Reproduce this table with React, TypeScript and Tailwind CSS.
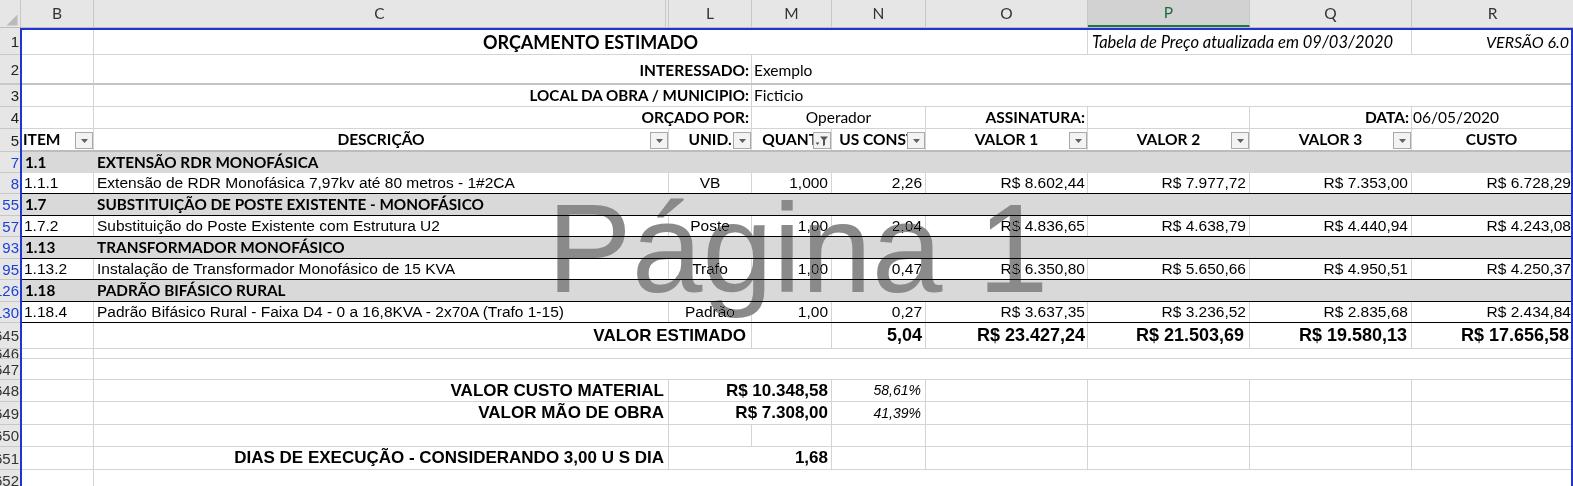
import React from "react";

const ARIAL = "font-['Liberation_Sans',Arial,sans-serif]";
const CAL = "font-['Lato','Carlito',sans-serif]";
const gl = "border-r border-[#d4d4d4]";
const rowB = "border-b border-[#d4d4d4]";

const B = "w-[72px]";
const C = "w-[575px]";
const L = "w-[83px]";
const M = "w-[80px]";
const N = "w-[94px]";
const O = "w-[162px]";
const P = "w-[162px]";
const Q = "w-[162px]";
const R = "w-[159px]";

function Cell({ w, cls = "", children }: { w: string; cls?: string; children?: React.ReactNode }) {
  return (
    <div className={`${w} shrink-0 h-full flex items-center overflow-hidden whitespace-nowrap relative ${cls}`}>
      {children}
    </div>
  );
}

function Row({ h, b = "", cls = "", children }: { h: string; b?: string; cls?: string; children?: React.ReactNode }) {
  return <div className={`flex w-full ${h} ${b} ${cls}`}>{children}</div>;
}

function FilterBtn({ active = false }: { active?: boolean }) {
  return (
    <div className="absolute right-0 top-[3px] w-[18px] h-[17px] border border-[#a9a9a9] bg-[#f3f3f3] flex items-center justify-center">
      {active ? (
        <svg width="14" height="12" viewBox="0 0 14 12">
          <path d="M5 1.5h8l-3 3.5v5l-2 1V5z" fill="#555" />
          <path d="M0.5 7.5h4l-2 2.5z" fill="#555" />
        </svg>
      ) : (
        <svg width="7" height="4" viewBox="0 0 7 4">
          <path d="M0 0h7L3.5 4z" fill="#606060" />
        </svg>
      )}
    </div>
  );
}

const rowHeaders: { l: string; h: string; c: string; b: string }[] = [
  { l: "1", h: "h-[27px]", c: "text-[#222]", b: "border-b" },
  { l: "2", h: "h-[30px]", c: "text-[#222]", b: "border-b-2" },
  { l: "3", h: "h-[22px]", c: "text-[#222]", b: "border-b" },
  { l: "4", h: "h-[22px]", c: "text-[#222]", b: "border-b" },
  { l: "5", h: "h-[23px]", c: "text-[#222]", b: "border-b" },
  { l: "7", h: "h-[21px]", c: "text-[#1d3fd6]", b: "border-b" },
  { l: "8", h: "h-[21px]", c: "text-[#1d3fd6]", b: "border-b" },
  { l: "55", h: "h-[22px]", c: "text-[#1d3fd6]", b: "border-b" },
  { l: "57", h: "h-[21px]", c: "text-[#1d3fd6]", b: "border-b" },
  { l: "93", h: "h-[22px]", c: "text-[#1d3fd6]", b: "border-b" },
  { l: "95", h: "h-[21px]", c: "text-[#1d3fd6]", b: "border-b" },
  { l: "126", h: "h-[22px]", c: "text-[#1d3fd6]", b: "border-b" },
  { l: "130", h: "h-[21px]", c: "text-[#1d3fd6]", b: "border-b" },
  { l: "645", h: "h-[26px]", c: "text-[#333]", b: "border-b" },
  { l: "646", h: "h-[10px]", c: "text-[#333]", b: "border-b" },
  { l: "647", h: "h-[21px]", c: "text-[#333]", b: "border-b" },
  { l: "648", h: "h-[22px]", c: "text-[#333]", b: "border-b" },
  { l: "649", h: "h-[23px]", c: "text-[#333]", b: "border-b" },
  { l: "650", h: "h-[22px]", c: "text-[#333]", b: "border-b" },
  { l: "651", h: "h-[23px]", c: "text-[#333]", b: "border-b" },
  { l: "652", h: "h-[22px]", c: "text-[#333]", b: "border-b" },
];

function DataRow({ item, desc, unit, qty, us, v1, v2, v3, cost }: { item: string; desc: string; unit: string; qty: string; us: string; v1: string; v2: string; v3: string; cost: string }) {
  return (
    <Row h="h-[21px]" b="border-b border-black" cls={`${ARIAL} text-[15.5px] text-black`}>
      <Cell w={B} cls={`${gl} pl-[2px]`}>{item}</Cell>
      <Cell w={C} cls={`${gl} pl-[3px]`}>{desc}</Cell>
      <Cell w={L} cls={`${gl} justify-center`}>{unit}</Cell>
      <Cell w={M} cls={`${gl} justify-end pr-[3px]`}>{qty}</Cell>
      <Cell w={N} cls={`${gl} justify-end pr-[3px]`}>{us}</Cell>
      <Cell w={O} cls={`${gl} justify-end pr-[2px]`}>{v1}</Cell>
      <Cell w={P} cls={`${gl} justify-end pr-[3px]`}>{v2}</Cell>
      <Cell w={Q} cls={`${gl} justify-end pr-[3px]`}>{v3}</Cell>
      <Cell w={R} cls="justify-end pr-0 overflow-visible">{cost}</Cell>
    </Row>
  );
}

function GroupRow({ item, title, last = true }: { item: string; title: string; last?: boolean }) {
  return (
    <Row
      h={last ? "h-[22px]" : "h-[21px]"}
      b={last ? "border-b border-black" : ""}
      cls={`bg-[#d9d9d9] ${CAL} font-bold text-[15.3px] text-black`}
    >
      <Cell w={B} cls="pl-[3px]">{item}</Cell>
      <Cell w="w-[1477px]" cls="pl-[3px]">{title}</Cell>
    </Row>
  );
}

export default function App() {
  const colHdr = `h-full flex items-center justify-center border-r border-[#c8c8c8] text-[15.5px] text-[#333] ${CAL}`;
  return (
    <div className="w-[1573px] h-[486px] overflow-hidden relative bg-white">
      {/* Column header */}
      <div className="flex h-[28px] bg-[#e6e6e6] border-b border-[#bdbdbd]">
        <div className="w-[21px] shrink-0 h-full border-r border-[#c8c8c8] relative">
          <svg width="21" height="27" viewBox="0 0 21 27" className="absolute left-0 top-0">
            <path d="M17.5 14.5V25.5H6.5z" fill="#b9b9b9" />
          </svg>
        </div>
        <div className={`w-[73px] shrink-0 ${colHdr}`}>B</div>
        <div className={`w-[572px] shrink-0 ${colHdr}`}>C</div>
        <div className={`w-[3px] shrink-0 ${colHdr}`}></div>
        <div className={`w-[83px] shrink-0 ${colHdr}`}>L</div>
        <div className={`w-[80px] shrink-0 ${colHdr}`}>M</div>
        <div className={`w-[94px] shrink-0 ${colHdr}`}>N</div>
        <div className={`w-[162px] shrink-0 ${colHdr}`}>O</div>
        <div className={`w-[162px] shrink-0 h-full flex items-center justify-center border-r border-[#c8c8c8] border-b-2 border-b-[#217346] bg-[#d2d2d2] text-[15.5px] text-[#1e6b3f] ${CAL}`}>P</div>
        <div className={`w-[162px] shrink-0 ${colHdr}`}>Q</div>
        <div className={`flex-1 ${colHdr} border-r-0`}>R</div>
      </div>

      <div className="flex">
        {/* Row headers */}
        <div className="w-[20px] shrink-0 flex flex-col bg-[#e6e6e6]">
          {rowHeaders.map((r) => (
            <div
              key={r.l}
              className={`${r.h} ${r.b} border-[#c8c8c8] shrink-0 flex items-center justify-end overflow-hidden pr-[1px] ${ARIAL} text-[15px] leading-none ${r.c}`}
            >
              <span className="whitespace-nowrap">{r.l}</span>
            </div>
          ))}
        </div>

        {/* Sheet */}
        <div className="w-[1553px] shrink-0 flex flex-col border-l-2 border-t-2 border-r-2 border-[#1f35d0]">
          {/* Row 1 */}
          <Row h="h-[25px]" b={rowB} cls={`${CAL} text-black`}>
            <Cell w={B} cls={gl} />
            <Cell w="w-[994px]" cls={`${gl} justify-center font-bold text-[18px]`}>ORÇAMENTO ESTIMADO</Cell>
            <Cell w="w-[324px]" cls={`${gl} pl-[4px] italic text-[16.5px]`}>Tabela de Preço atualizada em 09/03/2020</Cell>
            <Cell w={R} cls="justify-end pr-[2px] italic text-[16px]">VERSÃO 6.0</Cell>
          </Row>
          {/* Row 2 */}
          <Row h="h-[30px]" b="border-b-2 border-[#c4c4c4]" cls={`${CAL} text-[15.5px] text-black`}>
            <Cell w={B} cls={gl} />
            <Cell w="w-[658px]" cls={`${gl} justify-end pr-[2px] pt-[3px] font-bold`}>INTERESSADO:</Cell>
            <Cell w="w-[819px]" cls="pl-[2px] pt-[3px]">Exemplo</Cell>
          </Row>
          {/* Row 3 */}
          <Row h="h-[22px]" b={rowB} cls={`${CAL} text-[15.5px] text-black`}>
            <Cell w={B} cls={gl} />
            <Cell w="w-[658px]" cls={`${gl} justify-end pr-[2px] font-bold text-[15.2px]`}>LOCAL DA OBRA / MUNICIPIO:</Cell>
            <Cell w="w-[819px]" cls="pl-[2px]">Ficticio</Cell>
          </Row>
          {/* Row 4 */}
          <Row h="h-[22px]" b={rowB} cls={`${CAL} text-[15.5px] text-black`}>
            <Cell w={B} cls={gl} />
            <Cell w="w-[658px]" cls={`${gl} justify-end pr-[2px] font-bold`}>ORÇADO POR:</Cell>
            <Cell w="w-[174px]" cls={`${gl} justify-center`}>Operador</Cell>
            <Cell w={O} cls={`${gl} justify-end pr-[2px] font-bold`}>ASSINATURA:</Cell>
            <Cell w={P} cls={gl} />
            <Cell w={Q} cls={`${gl} justify-end pr-[2px] font-bold`}>DATA:</Cell>
            <Cell w={R} cls="pl-[1px]">06/05/2020</Cell>
          </Row>
          {/* Row 5 headers */}
          <Row h="h-[23px]" b="border-b-2 border-[#bcbcbc]" cls={`${CAL} text-[15.5px] font-bold text-black`}>
            <Cell w={B} cls={`${gl} pl-[1px]`}>
              ITEM
              <FilterBtn />
            </Cell>
            <Cell w={C} cls={`${gl} justify-center`}>
              DESCRIÇÃO
              <FilterBtn />
            </Cell>
            <Cell w={L} cls={`${gl} justify-center`}>
              UNID.
              <FilterBtn />
            </Cell>
            <Cell w={M} cls={`${gl} justify-center`}>
              QUANT.
              <FilterBtn active />
            </Cell>
            <Cell w={N} cls={`${gl} justify-center`}>
              US CONST.
              <FilterBtn />
            </Cell>
            <Cell w={O} cls={`${gl} justify-center`}>
              VALOR 1
              <FilterBtn />
            </Cell>
            <Cell w={P} cls={`${gl} justify-center`}>
              VALOR 2
              <FilterBtn />
            </Cell>
            <Cell w={Q} cls={`${gl} justify-center`}>
              VALOR 3
              <FilterBtn />
            </Cell>
            <Cell w={R} cls="justify-center">CUSTO</Cell>
          </Row>

          <GroupRow item="1.1" title="EXTENSÃO RDR MONOFÁSICA" last={false} />
          <DataRow item="1.1.1" desc="Extensão de RDR Monofásica 7,97kv até 80 metros - 1#2CA" unit="VB" qty="1,000" us="2,26" v1="R$ 8.602,44" v2="R$ 7.977,72" v3="R$ 7.353,00" cost="R$ 6.728,29" />
          <GroupRow item="1.7" title="SUBSTITUIÇÃO DE POSTE EXISTENTE - MONOFÁSICO" />
          <DataRow item="1.7.2" desc="Substituição do Poste Existente com Estrutura U2" unit="Poste" qty="1,00" us="2,04" v1="R$ 4.836,65" v2="R$ 4.638,79" v3="R$ 4.440,94" cost="R$ 4.243,08" />
          <GroupRow item="1.13" title="TRANSFORMADOR MONOFÁSICO" />
          <DataRow item="1.13.2" desc="Instalação de Transformador Monofásico de 15 KVA" unit="Trafo" qty="1,00" us="0,47" v1="R$ 6.350,80" v2="R$ 5.650,66" v3="R$ 4.950,51" cost="R$ 4.250,37" />
          <GroupRow item="1.18" title="PADRÃO BIFÁSICO RURAL" />
          <DataRow item="1.18.4" desc="Padrão Bifásico Rural - Faixa D4 - 0 a 16,8KVA - 2x70A (Trafo 1-15)" unit="Padrão" qty="1,00" us="0,27" v1="R$ 3.637,35" v2="R$ 3.236,52" v3="R$ 2.835,68" cost="R$ 2.434,84" />

          {/* Row 645 */}
          <Row h="h-[26px]" b={rowB} cls={`${ARIAL} font-bold text-black`}>
            <Cell w={B} cls={gl} />
            <Cell w="w-[658px]" cls={`${gl} justify-end pr-[5px] text-[17px]`}>VALOR ESTIMADO</Cell>
            <Cell w={M} cls={gl} />
            <Cell w={N} cls={`${gl} justify-end pr-[3px] text-[18px]`}>5,04</Cell>
            <Cell w={O} cls={`${gl} justify-end pr-[2px] text-[18px]`}>R$ 23.427,24</Cell>
            <Cell w={P} cls={`${gl} justify-end pr-[5px] text-[18px]`}>R$ 21.503,69</Cell>
            <Cell w={Q} cls={`${gl} justify-end pr-[4px] text-[18px]`}>R$ 19.580,13</Cell>
            <Cell w={R} cls="justify-end pr-[2px] text-[18px]">R$ 17.656,58</Cell>
          </Row>
          {/* Row 646 */}
          <Row h="h-[10px]" b={rowB}>
            <Cell w={B} cls={gl} />
          </Row>
          {/* Row 647 */}
          <Row h="h-[21px]" b={rowB}>
            <Cell w={B} cls={gl} />
          </Row>
          {/* Row 648 */}
          <Row h="h-[22px]" b={rowB} cls={`${ARIAL} text-black`}>
            <Cell w={B} cls={gl} />
            <Cell w={C} cls={`${gl} justify-end pr-[4px] font-bold text-[17px]`}>VALOR CUSTO MATERIAL</Cell>
            <Cell w="w-[163px]" cls={`${gl} justify-end pr-[3px] font-bold text-[17px]`}>R$ 10.348,58</Cell>
            <Cell w={N} cls={`${gl} justify-end pr-[4px] italic text-[14px]`}>58,61%</Cell>
            <Cell w={O} cls={gl} />
            <Cell w={P} cls={gl} />
            <Cell w={Q} cls={gl} />
          </Row>
          {/* Row 649 */}
          <Row h="h-[23px]" b={rowB} cls={`${ARIAL} text-black`}>
            <Cell w={B} cls={gl} />
            <Cell w={C} cls={`${gl} justify-end pr-[4px] font-bold text-[17px]`}>VALOR MÃO DE OBRA</Cell>
            <Cell w="w-[163px]" cls={`${gl} justify-end pr-[3px] font-bold text-[17px]`}>R$ 7.308,00</Cell>
            <Cell w={N} cls={`${gl} justify-end pr-[4px] italic text-[14px]`}>41,39%</Cell>
            <Cell w={O} cls={gl} />
            <Cell w={P} cls={gl} />
            <Cell w={Q} cls={gl} />
          </Row>
          {/* Row 650 */}
          <Row h="h-[22px]" b={rowB}>
            <Cell w={B} cls={gl} />
            <Cell w={C} cls={gl} />
            <Cell w={L} cls={gl} />
            <Cell w={M} cls={gl} />
            <Cell w={N} cls={gl} />
            <Cell w={O} cls={gl} />
            <Cell w={P} cls={gl} />
            <Cell w={Q} cls={gl} />
          </Row>
          {/* Row 651 */}
          <Row h="h-[23px]" b={rowB} cls={`${ARIAL} text-black font-bold text-[17px]`}>
            <Cell w={B} cls={gl} />
            <Cell w={C} cls={`${gl} justify-end pr-[4px]`}>DIAS DE EXECUÇÃO - CONSIDERANDO 3,00 U S DIA</Cell>
            <Cell w="w-[163px]" cls={`${gl} justify-end pr-[3px]`}>1,68</Cell>
            <Cell w={N} cls={gl} />
            <Cell w={O} cls={gl} />
            <Cell w={P} cls={gl} />
            <Cell w={Q} cls={gl} />
          </Row>
          {/* Row 652 */}
          <Row h="h-[22px]" b={rowB}>
            <Cell w={B} cls={gl} />
          </Row>
        </div>
      </div>

      {/* Page watermark */}
      <div
        className={`absolute left-[547px] top-[185px] text-[127px] leading-none whitespace-nowrap text-[#8a8a8a] mix-blend-darken pointer-events-none ${ARIAL}`}
      >
        Página 1
      </div>
    </div>
  );
}
